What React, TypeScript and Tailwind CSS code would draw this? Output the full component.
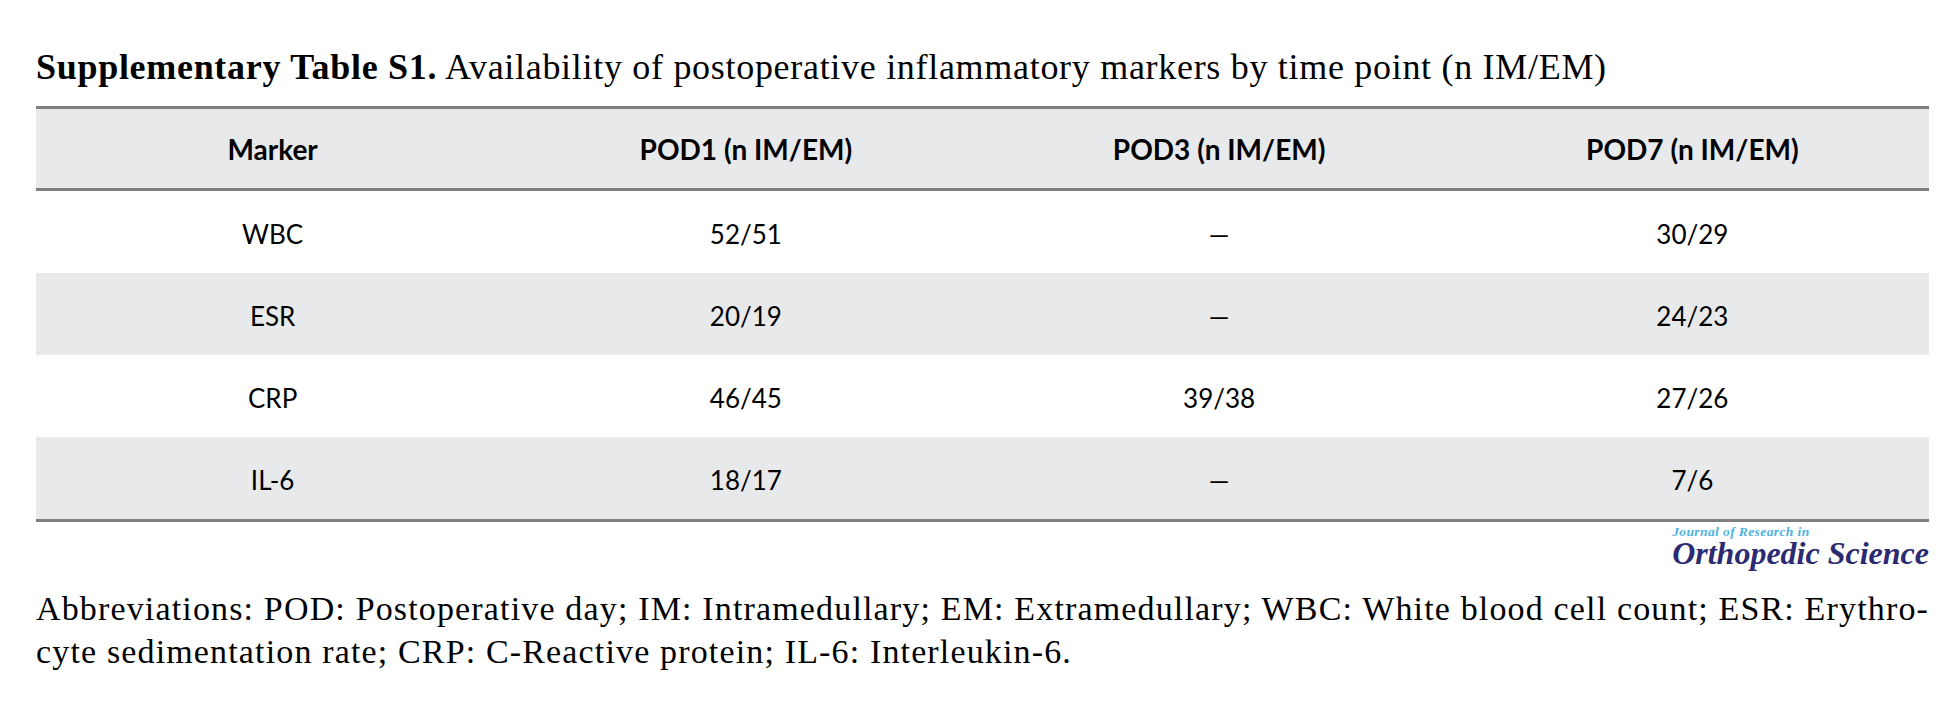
const rows = [
  { marker: 'WBC', pod1: '52/51', pod3: '—', pod7: '30/29' },
  { marker: 'ESR', pod1: '20/19', pod3: '—', pod7: '24/23' },
  { marker: 'CRP', pod1: '46/45', pod3: '39/38', pod7: '27/26' },
  { marker: 'IL-6', pod1: '18/17', pod3: '—', pod7: '7/6' },
]

const serif = "font-['Liberation_Serif','Times_New_Roman',serif]"
const sans = "font-['Lato','Open_Sans',sans-serif]"

export default function App() {
  return (
    <div className="min-h-[703px] w-[1957px] bg-white px-[36px] pt-[46px] text-black">
      {/* title */}
      <p className={`${serif} text-[36px] leading-[42px] tracking-[0.7px]`}>
        <span className="font-bold">Supplementary Table S1.</span> Availability of postoperative
        inflammatory markers by time point (n IM/EM)
      </p>

      {/* table */}
      <div className={`${sans} mt-[18px] w-[1893px] text-[26px]`}>
        <div className="grid h-[85px] grid-cols-4 items-center border-y-[3px] border-[#7f7f7f] bg-[#e8e9eb] text-[28px] font-bold">
          <div className="text-center">Marker</div>
          <div className="text-center">POD1 (n IM/EM)</div>
          <div className="text-center">POD3 (n IM/EM)</div>
          <div className="text-center">POD7 (n IM/EM)</div>
        </div>
        {rows.map((r, i) => (
          <div
            key={r.marker}
            className={`grid h-[82px] grid-cols-4 items-center pt-[4px] ${i % 2 === 1 ? 'bg-[#e8e9eb]' : 'bg-white'}`}
          >
            <div className="text-center">{r.marker}</div>
            <div className="text-center">{r.pod1}</div>
            <div className="text-center">{r.pod3}</div>
            <div className="text-center">{r.pod7}</div>
          </div>
        ))}
        <div className="h-[3px] bg-[#7f7f7f]" />
      </div>

      {/* journal logo */}
      <div className={`${serif} flex w-[1893px] justify-end`}>
        <div className="mt-[2px] flex flex-col font-bold italic">
          <span className="text-[13.5px] leading-[15px] tracking-[0.4px] text-[#4db3e2]">
            Journal of Research in
          </span>
          <span className="text-[32px] leading-[28px] text-[#2b2a72]">Orthopedic Science</span>
        </div>
      </div>

      {/* abbreviations */}
      <div className={`${serif} mt-[20px] w-[1893px] text-[34px] leading-[43px] tracking-[1.15px]`}>
        <p className="whitespace-nowrap text-justify [word-spacing:-3px] [text-align-last:justify]">
          Abbreviations: POD: Postoperative day; IM: Intramedullary; EM: Extramedullary; WBC: White
          blood cell count; ESR: Erythro-
        </p>
        <p>cyte sedimentation rate; CRP: C-Reactive protein; IL-6: Interleukin-6.</p>
      </div>
    </div>
  )
}
